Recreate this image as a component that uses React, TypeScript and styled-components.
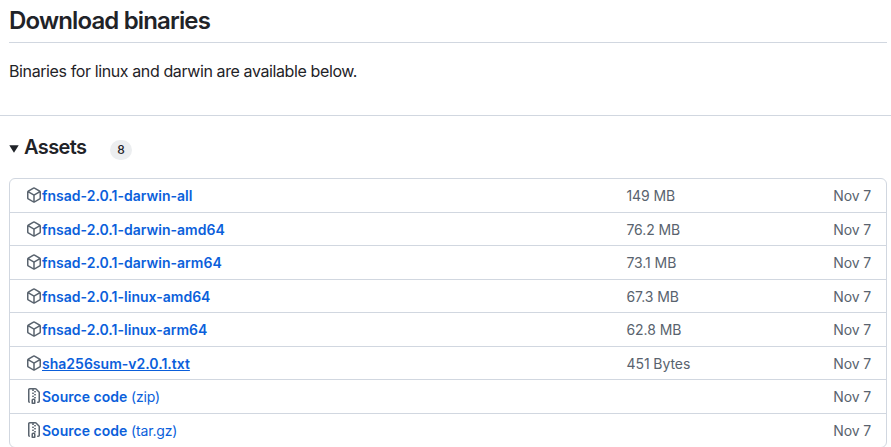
import React from "react";
import styled, { createGlobalStyle, css } from "styled-components";

const GlobalStyle = createGlobalStyle`
  * { box-sizing: border-box; }
  html, body { margin: 0; background: #fff; overflow: hidden; }
  body {
    height: 447px;
    color: #1f2328;
    font-family: Inter, "Liberation Sans", sans-serif;
    font-size: 14px;
    line-height: 20px;
  }
`;

const Page = styled.main`
  width: 891px;
  height: 447px;
  overflow: hidden;
`;

const Notes = styled.section`
  height: 116px;
  padding: 5px 4px 0 9px;
  border-bottom: 1px solid #d1d7e0;
`;

const Title = styled.h2`
  margin: 0;
  height: 38px;
  border-bottom: 1px solid #d1d7e0;
  font-size: 24px;
  line-height: 32px;
  font-weight: 640;
  letter-spacing: -0.85px;
`;

const Summary = styled.p`
  margin: 16px 0 0;
  font-size: 16px;
  line-height: 24px;
  letter-spacing: -0.39px;
`;

const AssetsHeader = styled.header`
  display: flex;
  align-items: center;
  height: 62px;
  padding: 0 0 0 9px;
`;

const Triangle = styled.svg`
  width: 10px;
  height: 8px;
  margin-top: 4px;
  fill: #1f2328;
`;

const AssetsTitle = styled.h3`
  width: 86px;
  margin: 0 0 0 5px;
  font-size: 20px;
  line-height: 30px;
  font-weight: 620;
  letter-spacing: -0.6px;
`;

const Counter = styled.span`
  width: 22px;
  height: 20px;
  margin-top: 5px;
  border-radius: 10px;
  background: #eceef0;
  font-size: 12px;
  line-height: 20px;
  font-weight: 500;
  text-align: center;
`;

const AssetList = styled.ul`
  margin: 0 4px 0 9px;
  padding: 0;
  list-style: none;
  border: 1px solid #d1d7e0;
  border-radius: 6px;
`;

const AssetRow = styled.li`
  display: flex;
  align-items: center;
  height: 33.5px;
  padding: 1.7px 15px 0 16px;
  border-bottom: 1px solid #d1d7e0;
  color: #59636e;

  &:last-child { border-bottom-color: transparent; }
`;

const Icon = styled.svg`
  flex: none;
  width: 16px;
  height: 16px;
  margin-top: -2px;
  fill: #59636e;
`;

const NameCell = styled.div`
  display: flex;
  align-items: center;
  width: 600.5px;
`;

const AssetLink = styled.a<{ $underlined?: boolean }>`
  color: #0b5fdb;
  letter-spacing: -0.15px;
  text-decoration: none;
  white-space: pre;
  ${(p) => p.$underlined && css`text-decoration: underline;`}
`;

const Name = styled.span`
  font-weight: 620;
  letter-spacing: 0.01px;
`;

const Size = styled.span`
  flex: 1;
  letter-spacing: -0.08px;
`;

const DateLabel = styled.span`
  letter-spacing: -0.15px;
`;

const PackageIcon = () => (
  <Icon viewBox="0 0 16 16">
    <path d="m8.878.392 5.25 3.045c.54.314.872.89.872 1.514v6.098a1.75 1.75 0 0 1-.872 1.514l-5.25 3.045a1.75 1.75 0 0 1-1.756 0l-5.25-3.045A1.75 1.75 0 0 1 1 11.049V4.951c0-.624.332-1.201.872-1.514L7.122.392a1.75 1.75 0 0 1 1.756 0ZM7.875 1.69l-4.63 2.685L8 7.133l4.755-2.758-4.63-2.685a.248.248 0 0 0-.25 0ZM2.5 5.677v5.372c0 .09.047.171.125.216l4.625 2.683V8.432Zm6.25 8.271 4.625-2.683a.25.25 0 0 0 .125-.216V5.677L8.75 8.432Z" />
  </Icon>
);

const ZipIcon = () => (
  <Icon viewBox="0 0 16 16">
    <path d="M3.5 1.75v11.5c0 .09.048.173.126.217a.75.75 0 0 1-.752 1.298A1.748 1.748 0 0 1 2 13.25V1.75C2 .784 2.784 0 3.75 0h5.586c.464 0 .909.185 1.237.513l2.914 2.914c.329.328.513.773.513 1.237v8.586A1.75 1.75 0 0 1 12.25 15h-.5a.75.75 0 0 1 0-1.5h.5a.25.25 0 0 0 .25-.25V4.664a.25.25 0 0 0-.073-.177L9.513 1.573a.25.25 0 0 0-.177-.073H7.25a.75.75 0 0 1 0 1.5h-.5a.75.75 0 0 1 0-1.5h-3a.25.25 0 0 0-.25.25Zm3.75 8.75h.5c.966 0 1.75.784 1.75 1.75v3a.75.75 0 0 1-.75.75h-2.5a.75.75 0 0 1-.75-.75v-3c0-.966.784-1.75 1.75-1.75ZM6 5.25a.75.75 0 0 1 .75-.75h.5a.75.75 0 0 1 0 1.5h-.5A.75.75 0 0 1 6 5.25Zm.75 2.25h.5a.75.75 0 0 1 0 1.5h-.5a.75.75 0 0 1 0-1.5ZM8 6.75A.75.75 0 0 1 8.75 6h.5a.75.75 0 0 1 0 1.5h-.5A.75.75 0 0 1 8 6.75ZM8.75 3h.5a.75.75 0 0 1 0 1.5h-.5a.75.75 0 0 1 0-1.5ZM8 9.75A.75.75 0 0 1 8.75 9h.5a.75.75 0 0 1 0 1.5h-.5A.75.75 0 0 1 8 9.75Zm-1 2.5v2.25h1v-2.25a.25.25 0 0 0-.25-.25h-.5a.25.25 0 0 0-.25.25Z" />
  </Icon>
);

interface Asset {
  name: string;
  suffix?: string;
  size?: string;
  underlined?: boolean;
}

const assets: Asset[] = [
  { name: "fnsad-2.0.1-darwin-all", size: "149 MB" },
  { name: "fnsad-2.0.1-darwin-amd64", size: "76.2 MB" },
  { name: "fnsad-2.0.1-darwin-arm64", size: "73.1 MB" },
  { name: "fnsad-2.0.1-linux-amd64", size: "67.3 MB" },
  { name: "fnsad-2.0.1-linux-arm64", size: "62.8 MB" },
  { name: "sha256sum-v2.0.1.txt", size: "451 Bytes", underlined: true },
  { name: "Source code", suffix: "(zip)" },
  { name: "Source code", suffix: "(tar.gz)" },
];

export default function App() {
  return (
    <Page>
      <GlobalStyle />
      <Notes>
        <Title>Download binaries</Title>
        <Summary>Binaries for linux and darwin are available below.</Summary>
      </Notes>
      <AssetsHeader>
        <Triangle viewBox="0 0 10 8"><path d="M0.3 0.3h9.4L5 7.8z" /></Triangle>
        <AssetsTitle>Assets</AssetsTitle>
        <Counter>8</Counter>
      </AssetsHeader>
      <AssetList>
        {assets.map((a) => (
          <AssetRow key={a.name + (a.suffix ?? "")}>
            <NameCell>
              {a.suffix ? <ZipIcon /> : <PackageIcon />}
              <AssetLink $underlined={a.underlined}>
                <Name>{a.name}</Name>
                {a.suffix && ` ${a.suffix}`}
              </AssetLink>
            </NameCell>
            <Size>{a.size}</Size>
            <DateLabel>Nov 7</DateLabel>
          </AssetRow>
        ))}
      </AssetList>
    </Page>
  );
}
